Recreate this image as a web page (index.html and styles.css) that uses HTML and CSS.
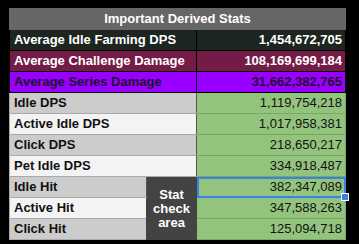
FILE: index.html
```html
<!DOCTYPE html>
<html>
<head>
<meta charset="utf-8">
<link rel="stylesheet" href="styles.css">
</head>
<body>
<table class="stats">
  <colgroup><col class="c-lbl"><col class="c-stat"><col class="c-val"></colgroup>
  <tr class="hdr"><td colspan="3">Important Derived Stats</td></tr>
  <tr class="dark"><td class="lbl" colspan="2">Average Idle Farming DPS</td><td class="val">1,454,672,705</td></tr>
  <tr class="maroon"><td class="lbl" colspan="2">Average Challenge Damage</td><td class="val">108,169,699,184</td></tr>
  <tr class="purple"><td class="lbl" colspan="2">Average Series Damage</td><td class="val">31,662,382,765</td></tr>
  <tr class="g1"><td class="lbl" colspan="2">Idle DPS</td><td class="val green">1,119,754,218</td></tr>
  <tr class="g2"><td class="lbl" colspan="2">Active Idle DPS</td><td class="val green">1,017,958,381</td></tr>
  <tr class="g1"><td class="lbl" colspan="2">Click DPS</td><td class="val green">218,650,217</td></tr>
  <tr class="g2"><td class="lbl" colspan="2">Pet Idle DPS</td><td class="val green">334,918,487</td></tr>
  <tr class="g1"><td class="lbl">Idle Hit</td><td class="stat" rowspan="3">Stat<br>check<br>area</td><td class="val green sel">382,347,089<span class="handle"></span></td></tr>
  <tr class="g2"><td class="lbl">Active Hit</td><td class="val green">347,588,263</td></tr>
  <tr class="g1"><td class="lbl">Click Hit</td><td class="val green">125,094,718</td></tr>
</table>
</body>
</html>
```
FILE: styles.css
```css
html, body {
  margin: 0;
  padding: 0;
  background: #000;
  width: 359px;
  height: 244px;
  overflow: hidden;
}
body {
  padding: 8px 0 0 9px;
  box-sizing: border-box;
}
.stats {
  border-collapse: collapse;
  font-family: "Liberation Sans", Arial, sans-serif;
  font-size: 13px;
  font-weight: bold;
  width: 336px;
  table-layout: fixed;
}
.c-lbl { width: 137px; }
.c-stat { width: 50px; }
.c-val { width: 149px; }
.stats td {
  height: 20px;
  padding: 0;
  border: 1px solid #000;
  white-space: nowrap;
  box-sizing: border-box;
  line-height: 20px;
  overflow: visible;
}
.hdr td {
  background: #666666;
  color: #fff;
  text-align: center;
  border-color: #666666;
}
.lbl { padding-left: 4px !important; }
.val { text-align: right; padding-right: 3px !important; }
.dark td { background: #1c2520; color: #fff; }
.maroon td { background: #741b47; color: #fff; }
.purple td { background: #9900ff; color: #20102a; }
.g1 .lbl { background: #cccccc; color: #111; border-color: #a9a9a9; border-right-color: #555; }
.g2 .lbl { background: #f3f3f3; color: #111; border-color: #a9a9a9; border-right-color: #555; }
.stats td.green {
  background: #93c47d;
  color: #111;
  font-weight: normal;
  border-color: #78a866;
  border-left-color: #555;
}
.stat {
  background: #434343;
  color: #fff;
  text-align: center;
  line-height: 14px !important;
  border-color: #434343 !important;
  padding-top: 2px !important;
}
.sel { position: relative; outline: 2px solid #3b82e6; outline-offset: -2px; }
.handle {
  position: absolute;
  right: -4px;
  bottom: -4px;
  width: 6px;
  height: 6px;
  background: #3b82e6;
  border: 1px solid #fff;
}
```
